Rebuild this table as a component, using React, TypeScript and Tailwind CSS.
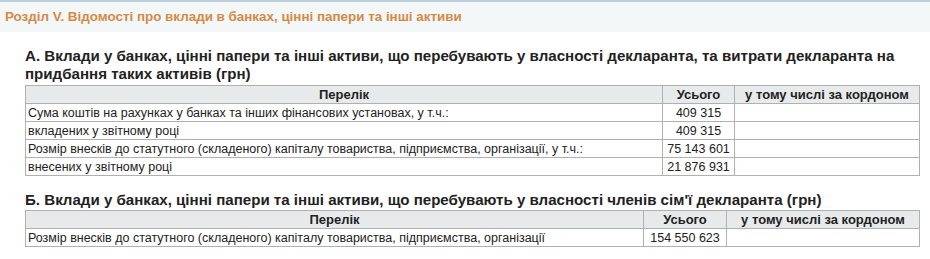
import React from "react";

const cell = "border border-[#b0b0b0] px-[2px] h-[18px] leading-[16px]";
const th = "border border-[#b0b0b0] px-[2px] h-[18px] leading-[16px] font-bold text-center text-[13px]";

export default function App() {
  return (
    <div className="w-[930px] h-[259px] bg-white text-[#222] overflow-hidden" style={{ fontFamily: '"Liberation Sans", Arial, sans-serif' }}>
      <div className="h-[32px] border-t-2 border-[#b9cfdc] bg-[#f4f7f7] flex items-center pl-[5px]">
        <span className="text-[13.4px] font-bold text-[#d38a47]">Розділ V. Відомості про вклади в банках, цінні папери та інші активи</span>
      </div>
      <div className="pl-[25px] pr-[10px] pt-[15px]">
        <h2 className="text-[15.1px] font-bold leading-[18px]">
          А. Вклади у банках, цінні папери та інші активи, що перебувають у власності декларанта, та витрати декларанта на придбання таких активів (грн)
        </h2>
        <table className="w-[895px] border-collapse text-[12.5px] mt-[2px]">
          <thead>
            <tr className="bg-[#e7eaeb]">
              <th className={th}>Перелік</th>
              <th className={`${th} w-[72px]`}>Усього</th>
              <th className={`${th} w-[185px]`}>у тому числі за кордоном</th>
            </tr>
          </thead>
          <tbody>
            <tr>
              <td className={cell}>Сума коштів на рахунках у банках та інших фінансових установах, у т.ч.:</td>
              <td className={`${cell} text-center`}>409 315</td>
              <td className={cell}></td>
            </tr>
            <tr>
              <td className={cell}>вкладених у звітному році</td>
              <td className={`${cell} text-center`}>409 315</td>
              <td className={cell}></td>
            </tr>
            <tr>
              <td className={cell}>Розмір внесків до статутного (складеного) капіталу товариства, підприємства, організації, у т.ч.:</td>
              <td className={`${cell} text-center`}>75 143 601</td>
              <td className={cell}></td>
            </tr>
            <tr>
              <td className={cell}>внесених у звітному році</td>
              <td className={`${cell} text-center`}>21 876 931</td>
              <td className={cell}></td>
            </tr>
          </tbody>
        </table>
        <h2 className="text-[15.1px] font-bold leading-[18px] mt-[15px]">
          Б. Вклади у банках, цінні папери та інші активи, що перебувають у власності членів сім'ї декларанта (грн)
        </h2>
        <table className="w-[895px] border-collapse text-[12.5px] mt-[1px]">
          <thead>
            <tr className="bg-[#e7eaeb]">
              <th className={th}>Перелік</th>
              <th className={`${th} w-[83px]`}>Усього</th>
              <th className={`${th} w-[193px]`}>у тому числі за кордоном</th>
            </tr>
          </thead>
          <tbody>
            <tr>
              <td className={cell}>Розмір внесків до статутного (складеного) капіталу товариства, підприємства, організації</td>
              <td className={`${cell} text-center`}>154 550 623</td>
              <td className={cell}></td>
            </tr>
          </tbody>
        </table>
      </div>
    </div>
  );
}
